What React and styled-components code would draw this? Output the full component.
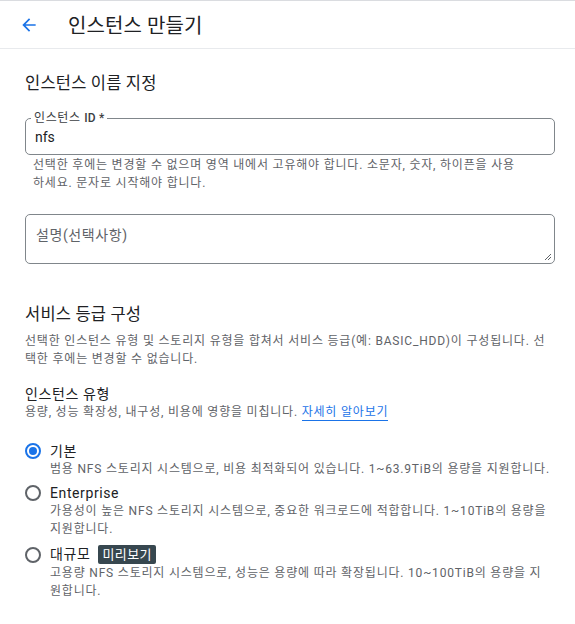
import styled, { createGlobalStyle } from "styled-components";

const GlobalStyle = createGlobalStyle`
  body {
    margin: 0;
    background: #fff;
    font-family: Roboto, "Noto Sans CJK KR", sans-serif;
    color: #202124;
  }
`;

const Page = styled.div`
  width: 575px;
  min-height: 624px;
  border-top: 1px solid #dadce0;
  box-sizing: border-box;
`;

const Header = styled.header`
  height: 47px;
  display: flex;
  align-items: center;
  border-bottom: 1px solid #e8eaed;
  padding-left: 18px;
  gap: 28px;
`;

const BackButton = styled.button`
  border: 0;
  background: none;
  padding: 0;
  width: 22px;
  height: 22px;
  display: flex;
  align-items: center;
  justify-content: center;
  cursor: pointer;
`;

const HeaderTitle = styled.h1`
  margin: 0;
  font-size: 20px;
  font-weight: 400;
  letter-spacing: 0.1px;
`;

const Body = styled.main`
  padding: 22px 10px 0 25px;
`;

const SectionTitle = styled.h2`
  margin: ${(p) => p.$top || 0}px 0 0;
  font-size: 16.5px;
  font-weight: 400;
  line-height: 26px;
  letter-spacing: 0.2px;
`;

const Field = styled.div`
  position: relative;
  width: 530px;
  margin-top: ${(p) => p.$top || 0}px;
  border: 1px solid #80868b;
  border-radius: 5px;
  height: ${(p) => p.$height}px;
  box-sizing: border-box;
`;

const FloatLabel = styled.span`
  position: absolute;
  top: -8px;
  left: 5px;
  padding: 0 3px;
  background: #fff;
  font-size: 12px;
  line-height: 14px;
  color: #3c4043;
  letter-spacing: 0.6px;
  b {
    font-weight: 500;
    letter-spacing: 0.2px;
  }
`;

const Value = styled.div`
  padding: 9px 0 0 9px;
  font-size: 14px;
  line-height: 18px;
`;

const Placeholder = styled.div`
  padding: 9px 0 0 10px;
  font-size: 14px;
  color: #5f6368;
  letter-spacing: 0.6px;
`;

const Resize = styled.svg`
  position: absolute;
  right: 2px;
  bottom: 2px;
`;

const Hint = styled.p`
  margin: ${(p) => p.$margin || "0"};
  padding-left: ${(p) => p.$indent || 0}px;
  font-size: 12px;
  line-height: 18px;
  color: #5f6368;
  letter-spacing: 0.8px;
  white-space: nowrap;
`;

const Subhead = styled.div`
  margin-top: 17px;
  font-size: 14px;
  line-height: 18px;
  font-weight: 400;
  letter-spacing: 0.6px;
`;

const Link = styled.a`
  color: #1a73e8;
  text-decoration: none;
  border-bottom: 1px solid #1a73e8;
  padding-bottom: 1px;
`;

const RadioList = styled.div`
  margin-top: 22px;
  display: flex;
  flex-direction: column;
  gap: 7px;
`;

const Option = styled.label`
  display: grid;
  grid-template-columns: 25px 1fr;
  align-items: start;
`;

const Radio = styled.span`
  width: 16px;
  height: 16px;
  margin-top: ${(p) => (p.$badge ? 2 : 0)}px;
  border-radius: 50%;
  box-sizing: border-box;
  border: 2px solid ${(p) => (p.$checked ? "#1a73e8" : "#5f6368")};
  display: flex;
  align-items: center;
  justify-content: center;
  &::after {
    content: "";
    width: 8px;
    height: 8px;
    border-radius: 50%;
    background: ${(p) => (p.$checked ? "#1a73e8" : "transparent")};
  }
`;

const OptionTitle = styled.div`
  display: flex;
  align-items: center;
  gap: 8px;
  font-size: 14px;
  line-height: 17px;
  letter-spacing: 0.6px;
`;

const Badge = styled.span`
  background: #37474f;
  color: #fff;
  font-size: 13px;
  line-height: 19px;
  padding: 0 4px;
  border-radius: 2px;
  letter-spacing: 0.4px;
`;

const options = [
  {
    title: "기본",
    checked: true,
    desc: ["범용 NFS 스토리지 시스템으로, 비용 최적화되어 있습니다. 1~63.9TiB의 용량을 지원합니다."],
  },
  {
    title: "Enterprise",
    desc: ["가용성이 높은 NFS 스토리지 시스템으로, 중요한 워크로드에 적합합니다. 1~10TiB의 용량을", "지원합니다."],
  },
  {
    title: "대규모",
    badge: "미리보기",
    desc: ["고용량 NFS 스토리지 시스템으로, 성능은 용량에 따라 확장됩니다. 10~100TiB의 용량을 지", "원합니다."],
  },
];

const Lines = ({ lines }) =>
  lines.map((l, i) => (
    <span key={i}>
      {i > 0 && <br />}
      {l}
    </span>
  ));

export default function App() {
  return (
    <Page>
      <GlobalStyle />
      <Header>
        <BackButton aria-label="뒤로">
          <svg width="20" height="20" viewBox="0 0 24 24">
            <path d="M20 11H7.83l5.59-5.59L12 4l-8 8 8 8 1.41-1.41L7.83 13H20v-2z" fill="#1a73e8" />
          </svg>
        </BackButton>
        <HeaderTitle>인스턴스 만들기</HeaderTitle>
      </Header>
      <Body>
        <SectionTitle>인스턴스 이름 지정</SectionTitle>
        <Field $top={21} $height={37}>
          <FloatLabel>
            인스턴스 <b>ID *</b>
          </FloatLabel>
          <Value>nfs</Value>
        </Field>
        <Hint $margin="1px 0 0" $indent={8}>
          <Lines
            lines={[
              "선택한 후에는 변경할 수 없으며 영역 내에서 고유해야 합니다. 소문자, 숫자, 하이픈을 사용",
              "하세요. 문자로 시작해야 합니다.",
            ]}
          />
        </Hint>
        <Field $top={22} $height={50}>
          <Placeholder>설명(선택사항)</Placeholder>
          <Resize width="8" height="8" viewBox="0 0 8 8">
            <path d="M7 1L1 7M7 4L4 7" stroke="#5f6368" strokeWidth="1" />
          </Resize>
        </Field>
        <SectionTitle $top={38}>서비스 등급 구성</SectionTitle>
        <Hint $margin="4px 0 0">
          <Lines
            lines={[
              "선택한 인스턴스 유형 및 스토리지 유형을 합쳐서 서비스 등급(예: BASIC_HDD)이 구성됩니다. 선",
              "택한 후에는 변경할 수 없습니다.",
            ]}
          />
        </Hint>
        <Subhead>인스턴스 유형</Subhead>
        <Hint $margin="0">
          용량, 성능 확장성, 내구성, 비용에 영향을 미칩니다. <Link href="#">자세히 알아보기</Link>
        </Hint>
        <RadioList>
          {options.map((o) => (
            <Option key={o.title}>
              <Radio $checked={o.checked} $badge={!!o.badge} />
              <div>
                <OptionTitle>
                  {o.title}
                  {o.badge && <Badge>{o.badge}</Badge>}
                </OptionTitle>
                <Hint>
                  <Lines lines={o.desc} />
                </Hint>
              </div>
            </Option>
          ))}
        </RadioList>
      </Body>
    </Page>
  );
}
